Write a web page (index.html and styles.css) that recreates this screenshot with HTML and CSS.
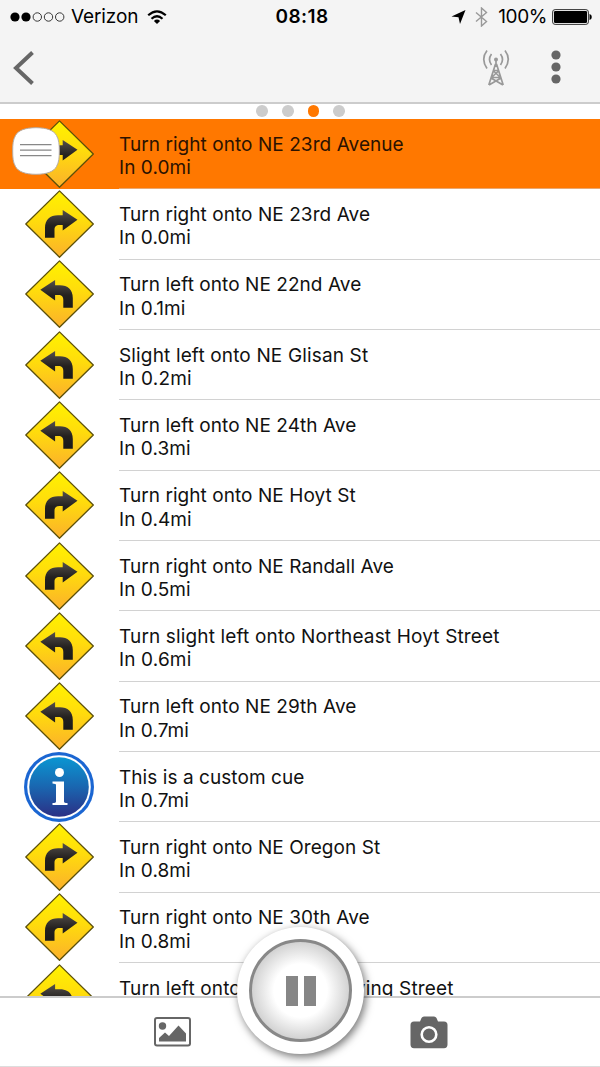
FILE: index.html
```
<!DOCTYPE html>
<html lang="en">
<head>
  <meta charset="utf-8">
  <meta name="viewport" content="width=device-width, initial-scale=1">
  <title>Cue Sheet</title>
  <link rel="stylesheet" href="styles.css">
</head>
<body>

<!-- shared icons -->
<svg class="defs" width="0" height="0">
  <defs>
    <linearGradient id="yellow" x1="0" y1="0" x2="0" y2="1">
      <stop offset="0" stop-color="#fff200"/>
      <stop offset=".45" stop-color="#ffdc0c"/>
      <stop offset="1" stop-color="#fbb02c"/>
    </linearGradient>
    <linearGradient id="dark" x1="0" y1="0" x2="0" y2="1">
      <stop offset="0" stop-color="#55504c"/>
      <stop offset=".55" stop-color="#24211f"/>
      <stop offset="1" stop-color="#1a1919"/>
    </linearGradient>
    <linearGradient id="blue" x1="0" y1="0" x2="0" y2="1">
      <stop offset="0" stop-color="#0a96d2"/>
      <stop offset=".5" stop-color="#1a66b0"/>
      <stop offset="1" stop-color="#2b2f85"/>
    </linearGradient>
    <path id="arrow" d="M20 47.700V38C20 29.500 25 25.300 33 25.300H37.700V20L52.500 29.700L37.700 40.500V35H34.500C31 35 29.500 36.500 29.500 40V47.700Z" fill="url(#dark)"/>
    <path id="diamond" d="M34.500 .9L68.300 34L34.500 67.200L.8 34Z" fill="url(#yellow)" stroke="#5c500a" stroke-width="1.300" stroke-linejoin="round"/>
  </defs>
  <symbol id="right" viewBox="0 0 69 68">
    <use href="#diamond"/>
    <use href="#arrow"/>
  </symbol>
  <symbol id="left" viewBox="0 0 69 68">
    <use href="#diamond"/>
    <use href="#arrow" transform="translate(67.800 0) scale(-1 1)"/>
  </symbol>
  <symbol id="info" viewBox="0 0 70 70">
    <circle cx="35" cy="35" r="35" fill="#1b66d2"/>
    <circle cx="35" cy="35" r="31.800" fill="#fff"/>
    <circle cx="35" cy="35" r="29.800" fill="url(#blue)"/>
    <circle cx="35.500" cy="20.500" r="4.500" fill="#fff"/>
    <path d="M28.500 29.500H40V49.500Q40 51 43.500 51V53H28.500V51Q32 51 32 49.500V33Q32 31.500 28.500 31.500Z" fill="#fff"/>
  </symbol>
</svg>

<div class="app">
  <header class="header">
    <div class="status">
      <div class="carrier">
        <svg width="55" height="12" viewBox="0 0 55 12">
          <circle cx="5" cy="6" r="4.600"/><circle cx="16" cy="6" r="4.600"/>
          <g fill="none" stroke="#222" stroke-width=".9"><circle cx="27.300" cy="6" r="4.200"/><circle cx="38.500" cy="6" r="4.200"/><circle cx="49.700" cy="6" r="4.200"/></g>
        </svg>
        <span class="carrierName">Verizon</span>
        <svg width="20" height="15" viewBox="0 0 20 15" fill="none" stroke="#000" stroke-width="2.200">
          <path d="M1.200 5.300Q10-2.700 18.800 5.300M4.500 8.700Q10 3.800 15.500 8.700"/>
          <path d="M10 14L6.900 10.900Q10 8.300 13.100 10.900Z" fill="#000" stroke="none"/>
        </svg>
      </div>
      <div class="time">08:18</div>
      <div class="power">
        <svg width="15" height="14" viewBox="0 0 15 14"><path d="M14.500 0L9 14L7.500 7.300L.5 6.500Z"/></svg>
        <svg class="bluetooth" width="13" height="20" viewBox="0 0 13 20" fill="none" stroke="#999" stroke-width="1.400"><path d="M1 5.500L11.500 14.500L6.500 19V1L11.500 5.500L1 14.500"/></svg>
        <span class="percent">100%</span>
        <svg width="40" height="16" viewBox="0 0 40 16">
          <rect x=".6" y=".6" width="35.800" height="14.800" rx="2.500" fill="none" stroke="#333"/>
          <rect x="2" y="2" width="33" height="12" rx="1.200"/>
          <path d="M37.500 5Q39.800 5.600 39.800 8T37.500 11Z"/>
        </svg>
      </div>
    </div>
    <div class="toolbar">
      <svg width="22" height="34" viewBox="0 0 22 34" fill="none" stroke="#666" stroke-width="4"><path d="M19.500 1.500L3 17L19.500 32.500"/></svg>
      <div class="tools">
        <svg width="28" height="37" viewBox="0 0 28 37" fill="none" stroke="#999" stroke-width="1.700">
          <path d="M5 1.500Q-1.500 10 5 19.500M9.500 5Q5.500 10.500 9.500 16M23 1.500Q29.500 10 23 19.500M18.500 5Q22.500 10.500 18.500 16"/>
          <circle cx="14" cy="10.500" r="2" fill="#999" stroke="none"/>
          <path d="M14 11V18M13.500 15L6.800 36M14.500 15L21.200 36M11.500 21.500H16.500M11.500 22L18.500 28.500M16.500 22L9.500 28.500M9.500 28.500H18.500M9 29L21 36M19 29L7 36"/>
        </svg>
        <svg width="10" height="34" viewBox="0 0 10 34" fill="#666"><circle cx="5" cy="5" r="4.600"/><circle cx="5" cy="17" r="4.600"/><circle cx="5" cy="29" r="4.600"/></svg>
      </div>
    </div>
  </header>

  <div class="pager">
    <i></i><i></i><i class="on"></i><i></i>
  </div>

  <main class="cues">
    <div class="cue active">
      <svg class="sign"><use href="#right"/></svg>
      <div class="text">Turn right onto NE 23rd Avenue<br>In 0.0mi</div>
      <svg class="handle" width="48" height="48" viewBox="0 0 48 48">
        <path d="M24 .7C35 .7 42 3.500 44.500 8.500C47 13 47.300 17 47.300 24S47 35 44.500 39.500C42 44.500 35 47.300 24 47.300S6 44.500 3.500 39.500C1 35 .7 31 .7 24S1 13 3.500 8.500C6 3.500 13 .7 24 .7Z" fill="#fff" stroke="#b5aca5"/>
        <path d="M8 17.700H39.500M8 23.200H39.500M8 28.700H39.500" stroke="#888" stroke-width="1.300"/>
      </svg>
    </div>
    <div class="cue">
      <svg class="sign"><use href="#right"/></svg>
      <div class="text">Turn right onto NE 23rd Ave<br>In 0.0mi</div>
    </div>
    <div class="cue">
      <svg class="sign"><use href="#left"/></svg>
      <div class="text">Turn left onto NE 22nd Ave<br>In 0.1mi</div>
    </div>
    <div class="cue">
      <svg class="sign"><use href="#left"/></svg>
      <div class="text wide">Slight left onto NE Glisan St<br>In 0.2mi</div>
    </div>
    <div class="cue">
      <svg class="sign"><use href="#left"/></svg>
      <div class="text">Turn left onto NE 24th Ave<br>In 0.3mi</div>
    </div>
    <div class="cue">
      <svg class="sign"><use href="#right"/></svg>
      <div class="text">Turn right onto NE Hoyt St<br>In 0.4mi</div>
    </div>
    <div class="cue">
      <svg class="sign"><use href="#right"/></svg>
      <div class="text">Turn right onto NE Randall Ave<br>In 0.5mi</div>
    </div>
    <div class="cue">
      <svg class="sign"><use href="#left"/></svg>
      <div class="text wide">Turn slight left onto Northeast Hoyt Street<br>In 0.6mi</div>
    </div>
    <div class="cue">
      <svg class="sign"><use href="#left"/></svg>
      <div class="text">Turn left onto NE 29th Ave<br>In 0.7mi</div>
    </div>
    <div class="cue">
      <svg class="sign info"><use href="#info"/></svg>
      <div class="text">This is a custom cue<br>In 0.7mi</div>
    </div>
    <div class="cue">
      <svg class="sign"><use href="#right"/></svg>
      <div class="text">Turn right onto NE Oregon St<br>In 0.8mi</div>
    </div>
    <div class="cue">
      <svg class="sign"><use href="#right"/></svg>
      <div class="text">Turn right onto NE 30th Ave<br>In 0.8mi</div>
    </div>
    <div class="cue">
      <svg class="sign"><use href="#left"/></svg>
      <div class="text wide">Turn left onto Northeast Irving Street</div>
    </div>
  </main>

  <footer class="footer">
    <svg width="37" height="30" viewBox="0 0 37 30">
      <rect x="1" y="1" width="35" height="27.500" rx="2" fill="none" stroke="#666" stroke-width="2"/>
      <circle cx="8.500" cy="9" r="3.700" fill="#666"/>
      <path d="M5 24.500V21L11 15.500L15 19L24.500 8.500L32 16.500V24.500Z" fill="#666"/>
    </svg>
    <svg width="38" height="33" viewBox="0 0 38 33">
      <path d="M4 5.500H10L11.500 2Q12.300 .5 14 .5H24Q25.700 .5 26.500 2L28 5.500H34Q37.500 5.500 37.500 9V28.500Q37.500 32.200 34 32.200H4Q.5 32.200 .5 28.500V9Q.5 5.500 4 5.500Z" fill="#666"/>
      <circle cx="19" cy="18.500" r="7.300" fill="none" stroke="#fff" stroke-width="2.600"/>
    </svg>
    <div class="pause">
      <div class="dial"><b></b><b></b></div>
    </div>
  </footer>
</div>

</body>
</html>
```
FILE: styles.css
```
* {
  box-sizing: border-box;
}
body {
  margin: 0;
  background: #fff;
  color: #111;
  font: 19px/23.4px Inter, "Liberation Sans", sans-serif;
}
svg {
  display: block;
  flex: none;
}
.defs {
  position: absolute;
}
.app {
  display: flex;
  flex-direction: column;
  height: 1067px;
  overflow: hidden;
}

/* top */
.header {
  height: 104px;
  background: #f4f4f4;
  border-bottom: 2px solid #ccc;
}
.status {
  display: grid;
  grid-template-columns: 1fr auto 1fr;
  align-items: center;
  height: 34px;
  padding: 0 8px 0 10px;
  color: #000;
}
.carrier, .power, .tools {
  display: flex;
  align-items: center;
}
.carrierName {
  margin: 0 9px 0 6px;
  letter-spacing: -.1px;
}
.time {
  padding-left: 2px;
  font-weight: 600;
  letter-spacing: .4px;
}
.power {
  justify-content: flex-end;
}
.bluetooth {
  margin: 0 10px 0 9px;
}
.percent {
  margin-right: 5px;
  letter-spacing: -.4px;
}
.toolbar {
  display: flex;
  justify-content: space-between;
  align-items: center;
  height: 67px;
  padding: 0 39px 0 13px;
}
.tools {
  gap: 41px;
  margin-top: -1px;
}
.pager {
  display: flex;
  justify-content: center;
  align-items: center;
  gap: 14px;
  height: 15px;
  padding: 0 0 1px 1px;
}
.pager i {
  width: 11.600px;
  height: 11.600px;
  border-radius: 50%;
  background: #ccc;
}
.pager .on {
  background: #ff7800;
}

/* cue list */
.cues {
  flex: 1;
  min-height: 0;
  overflow: hidden;
}
.cue {
  position: relative;
  display: flex;
  height: 70.350px;
  padding-left: 25px;
}
.active {
  background: #ff7800;
  color: #2b1200;
}
.sign {
  width: 69px;
  height: 68px;
  margin: .5px 25px 0 0;
}
.info {
  width: 70px;
  height: 70px;
  margin: 0 25px 0 -1px;
}
.text {
  flex: 1;
  padding-top: 13.500px;
  border-bottom: 1px solid #d2d2d2;
  letter-spacing: .06px;
  white-space: nowrap;
}
.wide {
  letter-spacing: .15px;
}
.active .text {
  border-bottom-color: #e8a873;
}
.handle {
  position: absolute;
  left: 12px;
  top: 8px;
}

/* bottom */
.footer {
  position: relative;
  display: flex;
  justify-content: center;
  align-items: center;
  gap: 219px;
  height: 71px;
  padding-left: 1px;
  border-top: 2px solid #ccc;
  border-bottom: 1px solid #ddd;
}
.pause {
  position: absolute;
  left: 237px;
  top: -71px;
  display: flex;
  align-items: center;
  justify-content: center;
  width: 127px;
  height: 127px;
  border-radius: 50%;
  background: #fff;
  box-shadow: 2px 3px 8px rgba(0,0,0,.55);
}
.dial {
  display: flex;
  align-items: center;
  justify-content: center;
  gap: 6px;
  width: 103px;
  height: 103px;
  border: 3px solid #888;
  border-radius: 50%;
  background: radial-gradient(circle closest-side, #fff 55%, #d2d2d2 100%);
}
.dial b {
  width: 12px;
  height: 30px;
  background: #868686;
}
```
